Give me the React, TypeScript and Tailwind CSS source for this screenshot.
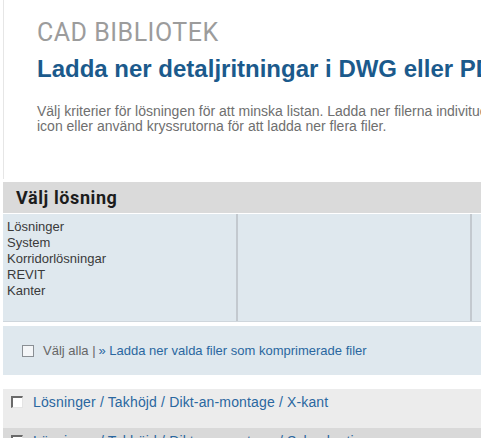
import React from 'react';

const categories = ['Lösninger', 'System', 'Korridorlösningar', 'REVIT', 'Kanter'];

const files = [
  'Lösninger / Takhöjd / Dikt-an-montage / X-kant',
  'Lösninger / Takhöjd / Dikt-an-montage / Schackrutig',
];

const App: React.FC = () => {
  return (
    <div className="w-[481px] h-[438px] overflow-hidden bg-white font-['Liberation_Sans',Arial,sans-serif]">
      <div className="w-[860px] pl-[3px]">
        {/* Intro */}
        <div className="border-l border-[#e6e6e6] h-[179px] pl-[33px] pt-[19px]">
          <div className="text-[25px] leading-[28px] text-[#9c9c9c] tracking-[0.5px] font-['Roboto',Arial,sans-serif]">CAD BIBLIOTEK</div>
          <h1 className="mt-[8px] text-[24px] leading-[28px] font-bold text-[#1b5a8c] whitespace-nowrap">
            Ladda ner detaljritningar i DWG eller PDF-format
          </h1>
          <p className="mt-[21px] text-[14px] leading-[15px] text-[#6f6f6f] whitespace-nowrap">
            Välj kriterier för lösningen för att minska listan. Ladda ner filerna indivituellt genom att klicka på
            <br />
            icon eller använd kryssrutorna för att ladda ner flera filer.
          </p>
        </div>

        {/* Välj lösning */}
        <div className="mt-[3px] h-[31px] bg-[#dadada] flex items-center pl-[13px]">
          <span className="text-[18px] font-bold text-[#1c1c1c] tracking-[0.6px] font-['Roboto',sans-serif]">Välj lösning</span>
        </div>
        <div className="h-[1px] bg-white" />
        <div className="flex h-[108px] bg-[#dfe8ee] border-b border-[#cfd6dc]">
          <div className="w-[233px] pl-[4px] pt-[5px] text-[13px] leading-[16px] text-[#3a3a3a]">
            {categories.map((c) => (
              <div key={c}>{c}</div>
            ))}
          </div>
          <div className="w-[2px] bg-[#c3c9cf]" />
          <div className="w-[232px]" />
          <div className="w-[2px] bg-[#c3c9cf]" />
          <div className="flex-1" />
        </div>

        {/* Välj alla */}
        <div className="mt-[4px] h-[49px] bg-[#dfe8ee] flex items-center pl-[19px] text-[13px]">
          <span className="w-[12px] h-[12px] border border-[#8a8f94] bg-[#f4f6f8] mr-[9px]" />
          <span className="text-[#666]">Välj alla | </span>
          <span className="text-[#2a67a0] ml-[3px]">» Ladda ner valda filer som komprimerade filer</span>
        </div>

        {/* Files */}
        <div className="mt-[14px]">
          {files.map((f, i) => (
            <div
              key={f}
              className={`h-[39px] flex items-start pt-[5px] pl-[8px] ${i === 0 ? 'bg-[#ececec]' : 'bg-[#d9d9d9]'}`}
            >
              <span className="mt-[2px] w-[12px] h-[12px] bg-white border-t-2 border-l-2 border-t-[#6a6a6a] border-l-[#6a6a6a] border-r border-b border-r-[#e4e4e4] border-b-[#e4e4e4] mr-[10px]" />
              <span className="text-[14px] leading-[16px] tracking-[0.15px] text-[#2a67a0] whitespace-nowrap">{f}</span>
            </div>
          ))}
        </div>
      </div>
    </div>
  );
};

export default App;
